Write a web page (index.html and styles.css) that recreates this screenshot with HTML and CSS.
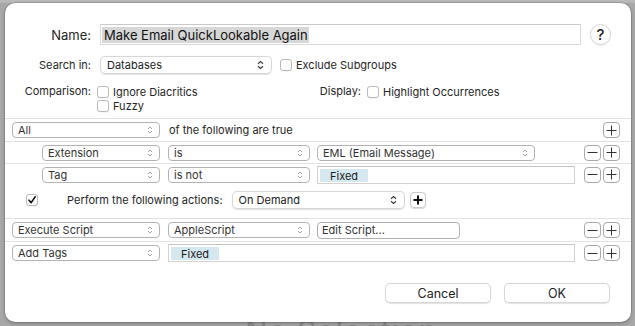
FILE: index.html
```html
<!DOCTYPE html>
<html>
<head>
<meta charset="utf-8">
<link rel="stylesheet" href="styles.css">
</head>
<body>
<div class="screen">
  <div class="sheet">
    <div class="name-row">
      <span class="lbl name-lbl">Name:</span>
      <div class="textfield"><span class="sel">Make Email QuickLookable Again</span></div>
      <div class="help">?</div>
    </div>
    <div class="search-row">
      <span class="lbl">Search in:</span>
      <div class="bigpop search-pop"><span>Databases</span>
        <svg class="chev-dark" width="7" height="10" viewBox="0 0 7 10"><path d="M1 3.8 L3.5 1.5 L6 3.8 M1 6.2 L3.5 8.5 L6 6.2" fill="none" stroke="#3c3c3c" stroke-width="1.2"/></svg>
      </div>
      <span class="cb cb-ex"></span><span class="cbtext">Exclude Subgroups</span>
    </div>
    <div class="comp-row">
      <span class="lbl">Comparison:</span>
      <div class="checks">
        <div class="checkline"><span class="cb"></span><span class="cbtext">Ignore Diacritics</span></div>
        <div class="checkline"><span class="cb"></span><span class="cbtext">Fuzzy</span></div>
      </div>
      <span class="lbl-display">Display:</span>
      <div class="checkline"><span class="cb cb-disp"></span><span class="cbtext">Highlight Occurrences</span></div>
    </div>

    <div class="rules">
      <div class="rrow">
        <div class="pop w148"><span>All</span><svg class="chev" width="6" height="10" viewBox="0 0 6 10"><path d="M1 4 L3 2 L5 4 M1 6 L3 8 L5 6" fill="none" stroke="#a6a6a6" stroke-width="1"/></svg></div>
        <span class="rtext">of the following are true</span>
        <div class="pm">
          <span class="sbtn"><svg width="11" height="11" viewBox="0 0 11 11"><path d="M5.5 0.5 V10.5 M0.5 5.5 H10.5" stroke="#333" stroke-width="1"/></svg></span>
        </div>
      </div>
      <div class="rrow lvl1">
        <div class="pop w118"><span>Extension</span><svg class="chev" width="6" height="10" viewBox="0 0 6 10"><path d="M1 4 L3 2 L5 4 M1 6 L3 8 L5 6" fill="none" stroke="#a6a6a6" stroke-width="1"/></svg></div>
        <div class="pop w142 g8"><span>is</span><svg class="chev" width="6" height="10" viewBox="0 0 6 10"><path d="M1 4 L3 2 L5 4 M1 6 L3 8 L5 6" fill="none" stroke="#a6a6a6" stroke-width="1"/></svg></div>
        <div class="pop w218 g7"><span>EML (Email Message)</span><svg class="chev" width="6" height="10" viewBox="0 0 6 10"><path d="M1 4 L3 2 L5 4 M1 6 L3 8 L5 6" fill="none" stroke="#a6a6a6" stroke-width="1"/></svg></div>
        <div class="pm">
          <span class="sbtn"><svg width="11" height="11" viewBox="0 0 11 11"><path d="M0.5 5.5 H10.5" stroke="#333" stroke-width="1"/></svg></span>
          <span class="sbtn"><svg width="11" height="11" viewBox="0 0 11 11"><path d="M5.5 0.5 V10.5 M0.5 5.5 H10.5" stroke="#333" stroke-width="1"/></svg></span>
        </div>
      </div>
      <div class="rrow lvl1">
        <div class="pop w118"><span>Tag</span><svg class="chev" width="6" height="10" viewBox="0 0 6 10"><path d="M1 4 L3 2 L5 4 M1 6 L3 8 L5 6" fill="none" stroke="#a6a6a6" stroke-width="1"/></svg></div>
        <div class="pop w142 g8"><span>is not</span><svg class="chev" width="6" height="10" viewBox="0 0 6 10"><path d="M1 4 L3 2 L5 4 M1 6 L3 8 L5 6" fill="none" stroke="#a6a6a6" stroke-width="1"/></svg></div>
        <div class="tokenfield w258 g7"><span class="token">Fixed</span></div>
        <div class="pm">
          <span class="sbtn"><svg width="11" height="11" viewBox="0 0 11 11"><path d="M0.5 5.5 H10.5" stroke="#333" stroke-width="1"/></svg></span>
          <span class="sbtn"><svg width="11" height="11" viewBox="0 0 11 11"><path d="M5.5 0.5 V10.5 M0.5 5.5 H10.5" stroke="#333" stroke-width="1"/></svg></span>
        </div>
      </div>
      <div class="perform">
        <span class="cb checked"><svg width="10" height="10" viewBox="0 0 10 10"><path d="M2 5.2 L4.2 7.6 L8.2 1.8" fill="none" stroke="#111" stroke-width="1.6" stroke-linecap="round" stroke-linejoin="round"/></svg></span>
        <span class="perform-text">Perform the following actions:</span>
        <div class="bigpop demand-pop"><span>On Demand</span>
          <svg class="chev-dark" width="7" height="10" viewBox="0 0 7 10"><path d="M1 3.8 L3.5 1.5 L6 3.8 M1 6.2 L3.5 8.5 L6 6.2" fill="none" stroke="#3c3c3c" stroke-width="1.2"/></svg>
        </div>
        <span class="boldplus"><svg width="10" height="10" viewBox="0 0 10 10"><path d="M5 0.5 V9.5 M0.5 5 H9.5" stroke="#111" stroke-width="2"/></svg></span>
      </div>
      <div class="rrow">
        <div class="pop w148"><span>Execute Script</span><svg class="chev" width="6" height="10" viewBox="0 0 6 10"><path d="M1 4 L3 2 L5 4 M1 6 L3 8 L5 6" fill="none" stroke="#a6a6a6" stroke-width="1"/></svg></div>
        <div class="pop w142 g8"><span>AppleScript</span><svg class="chev" width="6" height="10" viewBox="0 0 6 10"><path d="M1 4 L3 2 L5 4 M1 6 L3 8 L5 6" fill="none" stroke="#a6a6a6" stroke-width="1"/></svg></div>
        <div class="pbtn w143 g7">Edit Script...</div>
        <div class="pm">
          <span class="sbtn"><svg width="11" height="11" viewBox="0 0 11 11"><path d="M0.5 5.5 H10.5" stroke="#333" stroke-width="1"/></svg></span>
          <span class="sbtn"><svg width="11" height="11" viewBox="0 0 11 11"><path d="M5.5 0.5 V10.5 M0.5 5.5 H10.5" stroke="#333" stroke-width="1"/></svg></span>
        </div>
      </div>
      <div class="rrow">
        <div class="pop w148"><span>Add Tags</span><svg class="chev" width="6" height="10" viewBox="0 0 6 10"><path d="M1 4 L3 2 L5 4 M1 6 L3 8 L5 6" fill="none" stroke="#a6a6a6" stroke-width="1"/></svg></div>
        <div class="tokenfield w407 g8"><span class="token">Fixed</span></div>
        <div class="pm">
          <span class="sbtn"><svg width="11" height="11" viewBox="0 0 11 11"><path d="M0.5 5.5 H10.5" stroke="#333" stroke-width="1"/></svg></span>
          <span class="sbtn"><svg width="11" height="11" viewBox="0 0 11 11"><path d="M5.5 0.5 V10.5 M0.5 5.5 H10.5" stroke="#333" stroke-width="1"/></svg></span>
        </div>
      </div>
    </div>

    <div class="actions">
      <div class="btn">Cancel</div>
      <div class="btn">OK</div>
    </div>
  </div>
  <div class="behind">No Selection</div>
</div>
</body>
</html>
```

FILE: styles.css
```css
* { box-sizing: border-box; }
html, body { margin: 0; padding: 0; }
body {
  width: 635px;
  height: 326px;
  overflow: hidden;
  background: #a9a9a9;
  font-family: Inter, "Noto Sans", "Liberation Sans", sans-serif;
  font-size: 11px;
  color: #262626;
}
.screen {
  height: 326px;
  overflow: hidden;
  padding: 3px 0 0 5px;
  background: linear-gradient(#bababa 0, #b6b6b6 3px, #a8a8a8 3px);
}
.sheet {
  position: relative;
  z-index: 1;
  width: 626px;
  height: 319px;
  background: #fff;
  border-radius: 10px;
  box-shadow: 0 0 0 0.5px rgba(0,0,0,0.25), 0 2px 4px rgba(0,0,0,0.2);
  overflow: hidden;
}
.behind {
  margin: -6px 0 0 240px;
  font-size: 30px;
  line-height: 30px;
  color: #8a8a8a;
  letter-spacing: 1px;
}

/* header */
.lbl { width: 86px; text-align: right; flex: none; }
.name-row {
  display: flex;
  align-items: center;
  margin-top: 21px;
  height: 21px;
  font-size: 13px;
}
.textfield {
  margin-left: 9px;
  width: 481px;
  height: 21px;
  border: 1px solid #d9d9d9;
  border-top-color: #c9c9c9;
  display: flex;
  align-items: center;
  padding-left: 1px;
  color: #111;
}
.sel { background: #d7d7d7; padding: 0 1px 0 2px; line-height: 16px; }
.help {
  margin-left: 9px;
  width: 21px;
  height: 21px;
  border-radius: 50%;
  border: 1px solid #d4d4d4;
  box-shadow: 0 1px 1px rgba(0,0,0,0.08);
  display: flex;
  align-items: center;
  justify-content: center;
  font-size: 15px;
  font-weight: 500;
  color: #222;
}
.search-row {
  display: flex;
  align-items: center;
  margin-top: 11px;
  height: 18px;
}
.bigpop {
  height: 18px;
  border: 1px solid #d6d6d6;
  border-radius: 5px;
  box-shadow: 0 0.5px 1px rgba(0,0,0,0.12);
  display: flex;
  align-items: center;
  justify-content: space-between;
  padding: 0 7px 0 6px;
  color: #222;
  flex: none;
}
.search-pop { margin-left: 9px; width: 172px; }
.cb {
  width: 12px;
  height: 12px;
  border: 1px solid #b9b9b9;
  border-radius: 3px;
  background: #fff;
  box-shadow: 0 0.5px 0.5px rgba(0,0,0,0.08);
  flex: none;
  display: flex;
  align-items: center;
  justify-content: center;
}
.cbtext { margin-left: 4px; }
.cb-ex { margin-left: 8px; }
.comp-row {
  display: flex;
  align-items: flex-start;
  margin-top: 11px;
}
.comp-row .lbl { line-height: 13px; }
.checks { margin-left: 6px; width: 207px; flex: none; }
.checkline { display: flex; align-items: center; height: 13px; margin-bottom: 1px; }
.lbl-display { width: 57px; text-align: right; line-height: 13px; }
.cb-disp { margin-left: 6px; }
.cb-disp + .cbtext { margin-left: 4px; }

/* rules */
.rules { margin-top: 5px; }
.rrow {
  display: flex;
  align-items: center;
  height: 23px;
  border-top: 1px solid #e2e2e2;
  padding: 0 11px 0 7px;
}
.rrow.lvl1 { padding-left: 37px; height: 22px; }
.pop {
  height: 16px;
  border: 1px solid #b3b3b3;
  border-radius: 4px;
  display: flex;
  align-items: center;
  justify-content: space-between;
  padding: 0 5px 0 5px;
  color: #333;
  flex: none;
  background: #fff;
}
.chev { margin-right: 1px; }
.w148 { width: 148px; }
.w118 { width: 118px; }
.w142 { width: 142px; }
.w218 { width: 218px; }
.w258 { width: 258px; }
.w143 { width: 143px; }
.w407 { width: 407px; }
.g8 { margin-left: 8px; }
.g7 { margin-left: 7px; }
.rtext { margin-left: 9px; color: #262626; }
.pm { margin-left: auto; display: flex; gap: 2px; }
.sbtn {
  width: 17px;
  height: 16px;
  border: 1px solid #a9a9a9;
  border-radius: 4px;
  display: flex;
  align-items: center;
  justify-content: center;
  background: #fff;
}
.tokenfield {
  height: 18px;
  border: 1px solid #d3d3d3;
  border-top-color: #c4c4c4;
  display: flex;
  align-items: flex-end;
  padding: 0 0 1px 2px;
  flex: none;
}
.token {
  background: #d5e8ef;
  height: 13px;
  line-height: 14px;
  padding: 0 10px 0 10px;
  color: #1a1a1a;
  overflow: hidden;
}
.pbtn {
  height: 17px;
  border: 1px solid #b0b0b0;
  border-radius: 4px;
  padding-left: 4px;
  display: flex;
  align-items: center;
  color: #333;
  flex: none;
}
.perform {
  display: flex;
  align-items: center;
  height: 33px;
  padding: 0 0 3px 21px;
}
.perform-text { margin-left: 29px; }
.demand-pop { margin-left: 9px; width: 173px; }
.boldplus {
  margin-left: 5px;
  width: 16px;
  height: 16px;
  border: 1px solid #c9c9c9;
  border-radius: 4px;
  box-shadow: 0 0.5px 1px rgba(0,0,0,0.15);
  display: flex;
  align-items: center;
  justify-content: center;
}

/* actions */
.actions {
  display: flex;
  justify-content: flex-end;
  gap: 13px;
  padding-right: 21px;
  margin-top: 19px;
}
.btn {
  width: 106px;
  height: 20px;
  border: 1px solid #d6d6d6;
  border-radius: 5px;
  box-shadow: 0 0.5px 1px rgba(0,0,0,0.12);
  display: flex;
  align-items: center;
  justify-content: center;
  color: #222;
  font-size: 12.5px;
}
```
